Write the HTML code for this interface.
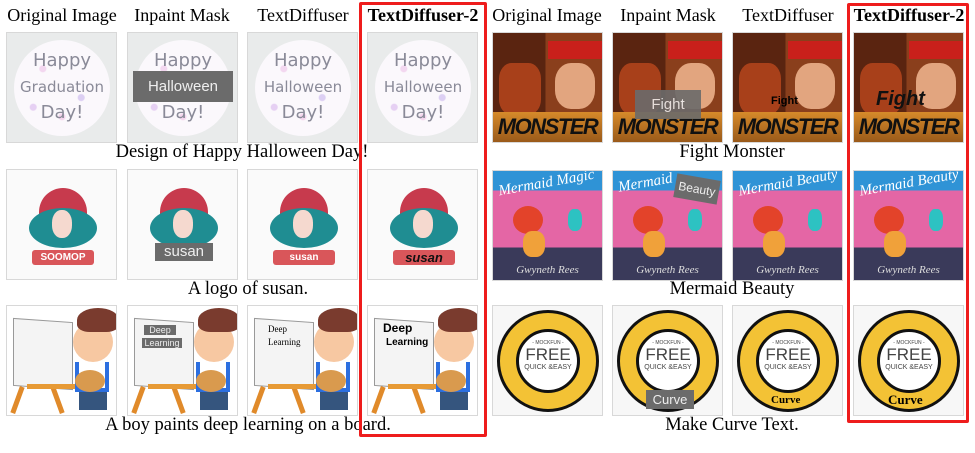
<!DOCTYPE html>
<html><head><meta charset="utf-8"><style>
*{margin:0;padding:0;box-sizing:border-box}
body{width:975px;height:453px;background:#fff;position:relative;overflow:hidden;font-family:"Liberation Serif",serif;color:#000}
.h{position:absolute;top:5px;font-size:18px;white-space:nowrap;text-align:center;width:124px}
.c{position:absolute;font-size:18.5px;white-space:nowrap;transform:translateX(-50%)}
.t{position:absolute;width:111px;height:111px;border:1px solid #d8d8d8;overflow:hidden}
.red{position:absolute;border:3px solid #ee1c1c;border-radius:2px}
.hal{background:#e9ebeb}
.hal .ci{position:absolute;left:7px;top:7px;width:96px;height:96px;border-radius:50%;background:radial-gradient(circle at 30% 30%,#f3d7f0 0 3px,transparent 4px),radial-gradient(circle at 70% 60%,#dccff3 0 3px,transparent 4px),radial-gradient(circle at 50% 80%,#f6d6ee 0 3px,transparent 4px),radial-gradient(circle at 20% 70%,#e6d0f3 0 3px,transparent 4px),#fbf8fc;color:#8a8a98;font-family:"DejaVu Sans",sans-serif;text-align:center;font-size:18px;line-height:26px;padding-top:8px}
.mask{position:absolute;background:#6b6b6b;color:#eee;font-family:"Liberation Sans",sans-serif;text-align:center}
.girl{background:#fafafa}
.girl .hat{position:absolute;left:32px;top:18px;width:48px;height:36px;border-radius:24px 24px 4px 4px;background:#c73a4d}
.girl .hair{position:absolute;left:22px;top:38px;width:68px;height:40px;border-radius:50%;background:#1f8d92}
.girl .face{position:absolute;left:45px;top:40px;width:20px;height:28px;border-radius:45%;background:#f5d9cf}
.girl .ban{position:absolute;left:25px;top:80px;width:62px;height:15px;background:#d9565a;border-radius:3px;color:#fff;font:bold 10px "Liberation Sans",sans-serif;text-align:center;line-height:15px}
.boy{background:#fff}
.boy .cv{position:absolute;left:6px;top:14px;width:60px;height:68px;background:#f4f4f4;border:1px solid #999;transform:skewY(4deg)}
.boy .leg1{position:absolute;left:8px;top:80px;width:5px;height:28px;background:#e08a2a;transform:rotate(20deg)}
.boy .leg2{position:absolute;left:48px;top:80px;width:5px;height:28px;background:#e08a2a;transform:rotate(-20deg)}
.boy .bar{position:absolute;left:20px;top:78px;width:50px;height:5px;background:#e79a35}
.boy .hatb{position:absolute;left:70px;top:2px;width:42px;height:24px;border-radius:50% 50% 30% 30%;background:#7a3b2e}
.boy .hd{position:absolute;left:66px;top:16px;width:40px;height:40px;border-radius:50%;background:#f7c8a2}
.boy .sh{position:absolute;left:68px;top:56px;width:34px;height:30px;background:#fff;border:4px solid #2c6fe0;border-top:none}
.boy .jn{position:absolute;left:72px;top:86px;width:28px;height:18px;background:#35557e}
.boy .pal{position:absolute;left:68px;top:64px;width:30px;height:22px;border-radius:50%;background:#d99a4e}
.mon{background:linear-gradient(90deg,#5a2410 0 48%,#8a3f1c 48%)}
.mon .r{position:absolute;left:55px;top:8px;width:56px;height:18px;background:#c9201b}
.mon .f1{position:absolute;left:6px;top:30px;width:42px;height:52px;background:#a8401a;border-radius:30%}
.mon .f2{position:absolute;left:62px;top:30px;width:40px;height:46px;background:#e2a57f;border-radius:40%}
.mon .m{position:absolute;left:0;bottom:0;width:100%;height:30px;text-align:center;font:bold 22px "Liberation Sans",sans-serif;letter-spacing:-1.5px;color:#111;background:linear-gradient(#d68a2a,#9a5a1a);line-height:30px;font-style:italic}
.mer{background:linear-gradient(#2f93d6 0 18%,#e466a5 18% 70%,#3a3a5a 70%)}
.mer .t1{position:absolute;left:5px;top:4px;color:#fff;font:italic 15px "Liberation Serif",serif;transform:rotate(-10deg)}
.mer .hr{position:absolute;left:20px;top:35px;width:30px;height:28px;background:#e3432a;border-radius:50%}
.mer .tl{position:absolute;left:30px;top:60px;width:22px;height:26px;background:#f0a13a;border-radius:40%}
.mer .sh{position:absolute;left:75px;top:38px;width:14px;height:22px;background:#2dc2c2;border-radius:40%}
.mer .nm{position:absolute;left:0;bottom:4px;width:100%;text-align:center;color:#ddd;font:italic 11px "Liberation Serif",serif}
.rnd{background:#f7f7f7}
.rnd .o{position:absolute;left:4px;top:4px;width:102px;height:102px;border-radius:50%;background:#f3c235;border:3px solid #111}
.rnd .i{position:absolute;left:23px;top:23px;width:64px;height:64px;border-radius:50%;background:#fff;border:3px solid #111;text-align:center;font-family:"Liberation Sans",sans-serif;color:#444}
</style></head><body>

<div class="h" style="left:0">Original Image</div>
<div class="h" style="left:120px">Inpaint Mask</div>
<div class="h" style="left:241px">TextDiffuser</div>
<div class="h" style="left:361px;font-weight:bold">TextDiffuser-2</div>
<div class="h" style="left:485px">Original Image</div>
<div class="h" style="left:606px">Inpaint Mask</div>
<div class="h" style="left:726px">TextDiffuser</div>
<div class="h" style="left:847px;font-weight:bold">TextDiffuser-2</div>

<div class="t hal" style="left:6px;top:32px"><div class="ci">Happy<br><span style="font-size:15px">Graduation</span><br>Day!</div></div>
<div class="t hal" style="left:127px;top:32px"><div class="ci">Happy<br>&nbsp;<br>Day!</div><div class="mask" style="left:5px;top:38px;width:100px;height:31px;line-height:31px;font-size:15px">Halloween</div></div>
<div class="t hal" style="left:247px;top:32px"><div class="ci">Happy<br><span style="font-size:15px">Halloween</span><br>Day!</div></div>
<div class="t hal" style="left:367px;top:32px"><div class="ci">Happy<br><span style="font-size:15px">Halloween</span><br>Day!</div></div>
<div class="c" style="left:242px;top:142px">Design of Happy Halloween Day!</div>

<div class="t girl" style="left:6px;top:169px"><div class="hat"></div><div class="hair"></div><div class="face"></div><div class="ban">SOOMOP</div></div>
<div class="t girl" style="left:127px;top:169px"><div class="hat"></div><div class="hair"></div><div class="face"></div><div class="mask" style="left:27px;top:73px;width:58px;height:18px;line-height:18px;font-size:15px">susan</div></div>
<div class="t girl" style="left:247px;top:169px"><div class="hat"></div><div class="hair"></div><div class="face"></div><div class="ban">susan</div></div>
<div class="t girl" style="left:367px;top:169px"><div class="hat"></div><div class="hair"></div><div class="face"></div><div class="ban" style="color:#111;font-size:13px;font-style:italic">susan</div></div>
<div class="c" style="left:248px;top:279px">A logo of susan.</div>

<div class="t boy" style="left:6px;top:305px"><div class="cv"></div><div class="leg1"></div><div class="leg2"></div><div class="bar"></div><div class="hd"></div><div class="hatb"></div><div class="sh"></div><div class="jn"></div><div class="pal"></div></div>
<div class="t boy" style="left:127px;top:305px"><div class="cv"></div><div class="leg1"></div><div class="leg2"></div><div class="bar"></div><div class="hd"></div><div class="hatb"></div><div class="sh"></div><div class="jn"></div><div class="pal"></div><div class="mask" style="left:16px;top:19px;width:32px;height:10px;font-size:9px;line-height:10px">Deep</div><div class="mask" style="left:14px;top:32px;width:40px;height:10px;font-size:9px;line-height:10px">Learning</div></div>
<div class="t boy" style="left:247px;top:305px"><div class="cv"></div><div class="leg1"></div><div class="leg2"></div><div class="bar"></div><div class="hd"></div><div class="hatb"></div><div class="sh"></div><div class="jn"></div><div class="pal"></div><div style="position:absolute;left:20px;top:17px;font-size:9px;line-height:13px">Deep<br>Learning</div></div>
<div class="t boy" style="left:367px;top:305px"><div class="cv"></div><div class="leg1"></div><div class="leg2"></div><div class="bar"></div><div class="hd"></div><div class="hatb"></div><div class="sh"></div><div class="jn"></div><div class="pal"></div><div style="position:absolute;left:15px;top:16px;font:bold 12px 'Liberation Sans',sans-serif;line-height:13px">Deep<br><span style="font-size:10px;margin-left:3px">Learning</span></div></div>
<div class="c" style="left:248px;top:415px">A boy paints deep learning on a board.</div>

<div class="t mon" style="left:492px;top:32px"><div class="r"></div><div class="f1"></div><div class="f2"></div><div class="m">MONSTER</div></div>
<div class="t mon" style="left:612px;top:32px"><div class="r"></div><div class="f1"></div><div class="f2"></div><div class="m">MONSTER</div><div class="mask" style="left:22px;top:57px;width:66px;height:29px;line-height:29px;font-size:15px;opacity:.9">Fight</div></div>
<div class="t mon" style="left:732px;top:32px"><div class="r"></div><div class="f1"></div><div class="f2"></div><div class="m">MONSTER</div><div style="position:absolute;left:38px;top:62px;font:bold 11px 'Liberation Sans',sans-serif">Fight</div></div>
<div class="t mon" style="left:853px;top:32px"><div class="r"></div><div class="f1"></div><div class="f2"></div><div class="m">MONSTER</div><div style="position:absolute;left:22px;top:55px;font:italic bold 20px 'Liberation Sans',sans-serif;color:#111">Fight</div></div>
<div class="c" style="left:732px;top:142px">Fight Monster</div>

<div class="t mer" style="left:492px;top:170px"><div class="t1">Mermaid Magic</div><div class="hr"></div><div class="tl"></div><div class="sh"></div><div class="nm">Gwyneth Rees</div></div>
<div class="t mer" style="left:612px;top:170px"><div class="t1">Mermaid</div><div class="hr"></div><div class="tl"></div><div class="sh"></div><div class="nm">Gwyneth Rees</div><div class="mask" style="left:62px;top:6px;width:44px;height:24px;line-height:24px;font-size:12px;transform:rotate(10deg)">Beauty</div></div>
<div class="t mer" style="left:732px;top:170px"><div class="t1">Mermaid Beauty</div><div class="hr"></div><div class="tl"></div><div class="sh"></div><div class="nm">Gwyneth Rees</div></div>
<div class="t mer" style="left:853px;top:170px"><div class="t1">Mermaid Beauty</div><div class="hr"></div><div class="tl"></div><div class="sh"></div><div class="nm">Gwyneth Rees</div></div>
<div class="c" style="left:732px;top:279px">Mermaid Beauty</div>

<div class="t rnd" style="left:492px;top:305px"><div class="o"></div><div class="i"><div style="font-size:5px;margin-top:8px">- MOCKFUN -</div><div style="font-size:17px;line-height:18px">FREE</div><div style="font-size:7px">QUICK &amp;EASY</div></div></div>
<div class="t rnd" style="left:612px;top:305px"><div class="o"></div><div class="i"><div style="font-size:5px;margin-top:8px">- MOCKFUN -</div><div style="font-size:17px;line-height:18px">FREE</div><div style="font-size:7px">QUICK &amp;EASY</div></div><div class="mask" style="left:33px;top:84px;width:48px;height:19px;line-height:19px;font-size:13px">Curve</div></div>
<div class="t rnd" style="left:732px;top:305px"><div class="o"></div><div class="i"><div style="font-size:5px;margin-top:8px">- MOCKFUN -</div><div style="font-size:17px;line-height:18px">FREE</div><div style="font-size:7px">QUICK &amp;EASY</div></div><div style="position:absolute;left:38px;top:88px;font:bold 11px 'Liberation Serif',serif">Curve</div></div>
<div class="t rnd" style="left:853px;top:305px"><div class="o"></div><div class="i"><div style="font-size:5px;margin-top:8px">- MOCKFUN -</div><div style="font-size:17px;line-height:18px">FREE</div><div style="font-size:7px">QUICK &amp;EASY</div></div><div style="position:absolute;left:34px;top:86px;font:bold 13px 'Liberation Serif',serif">Curve</div></div>
<div class="c" style="left:732px;top:415px">Make Curve Text.</div>

<div class="red" style="left:359px;top:2px;width:128px;height:435px"></div>
<div class="red" style="left:847px;top:3px;width:122px;height:420px"></div>
</body></html>
